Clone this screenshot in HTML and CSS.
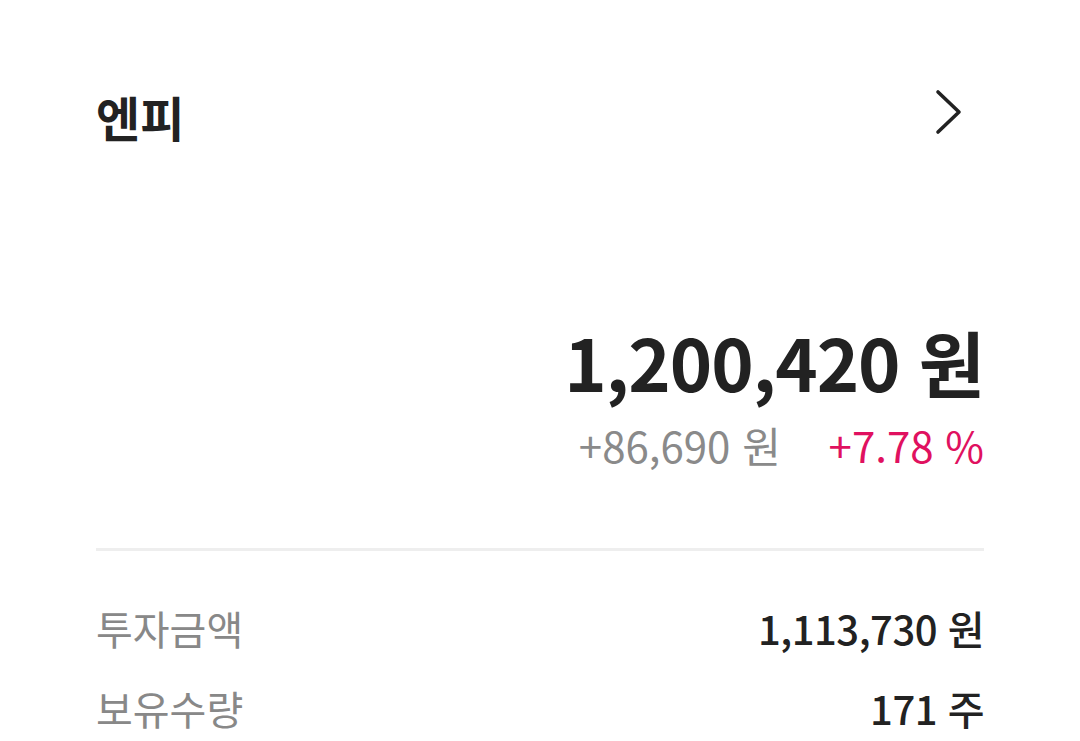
FILE: index.html
```html
<!DOCTYPE html>
<html lang="ko">
<head>
    <meta charset="UTF-8">
    <meta name="viewport" content="width=device-width, initial-scale=1.0">
    <title>엔피</title>
    <link rel="stylesheet" href="styles.css">
</head>
<body>

<div class="stock-card">
    <div class="card-header">
        <h2 class="stock-name">엔피</h2>
        <svg class="chevron" width="30" height="48" viewBox="0 0 30 48">
            <path d="M4 4 L25 24 L4 44" fill="none" stroke="#222" stroke-width="3.6" stroke-linecap="round" stroke-linejoin="round"/>
        </svg>
    </div>

    <div class="valuation">
        <div class="total">1,200,420 원</div>
        <div class="change">
            <span class="change-amount">+86,690 원</span>
            <span class="change-rate">+7.78 %</span>
        </div>
    </div>

    <hr class="divider">

    <div class="details">
        <div class="detail-row">
            <span class="detail-label">투자금액</span>
            <span class="detail-value">1,113,730 원</span>
        </div>
        <div class="detail-row">
            <span class="detail-label">보유수량</span>
            <span class="detail-value">171 주</span>
        </div>
    </div>
</div>

</body>
</html>
```

FILE: styles.css
```css
body {
    font-family: "Noto Sans CJK KR", "Noto Sans", sans-serif;
    margin: 0;
    padding: 0;
    background-color: #fff;
    color: #222;
}
.stock-card {
    padding: 76px 96px 0 96px;
}
.card-header {
    display: flex;
    align-items: center;
    justify-content: space-between;
}
.stock-name {
    margin: 0;
    font-size: 48px;
    font-weight: 700;
    line-height: 80px;
}
.chevron {
    margin-right: 20px;
    margin-bottom: 8px;
}
.valuation {
    margin-top: 165px;
    text-align: right;
}
.total {
    font-size: 72px;
    font-weight: 700;
    line-height: 80px;
    letter-spacing: -1px;
}
.change {
    margin-top: 16px;
    font-size: 42px;
    line-height: 56px;
}
.change-amount {
    color: #8a8a8a;
}
.change-rate {
    color: #e0115f;
    margin-left: 36px;
}
.divider {
    margin: 75px 0 0 0;
    border: none;
    height: 3px;
    background-color: #eeeeee;
}
.details {
    margin-top: 37px;
}
.detail-row {
    display: flex;
    justify-content: space-between;
    align-items: center;
    font-size: 40px;
    line-height: 80px;
}
.detail-label {
    color: #888;
}
.detail-value {
    color: #222;
    font-weight: 500;
    letter-spacing: -0.5px;
}
```
